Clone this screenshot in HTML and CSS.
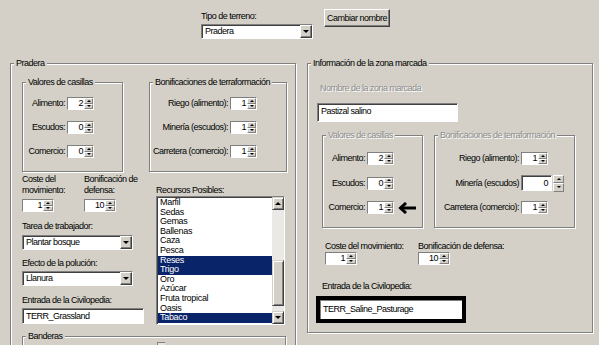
FILE: index.html
```html
<!DOCTYPE html>
<html lang="es">
<head>
  <meta charset="UTF-8">
  <title>Editor de terreno</title>
  <link rel="stylesheet" href="styles.css">
</head>
<body>
  <div class="top">
    <div class="terrain">
      <div class="lbl">Tipo de terreno:</div>
      <div class="combo combo-terrain"><span class="combo-text">Pradera</span><span class="drop"></span></div>
    </div>
    <div class="btn">Cambiar nombre</div>
  </div>

  <div class="panels">
    <!-- Panel izquierdo: terreno -->
    <div class="group panel-left">
      <div class="gtitle">Pradera</div>
      <div class="left-body">
        <div class="row-groups">
          <div class="group sub-vals">
            <div class="gtitle">Valores de casillas</div>
            <div class="fields pad-vals">
              <span class="flabel">Alimento:</span>
              <span class="spin"><span class="val">2</span><span class="ud"><i class="up"></i><i class="dn"></i></span></span>
              <span class="flabel">Escudos:</span>
              <span class="spin"><span class="val">0</span><span class="ud"><i class="up"></i><i class="dn"></i></span></span>
              <span class="flabel">Comercio:</span>
              <span class="spin"><span class="val">0</span><span class="ud"><i class="up"></i><i class="dn"></i></span></span>
            </div>
          </div>
          <div class="group sub-bonif">
            <div class="gtitle">Bonificaciones de terraformación</div>
            <div class="fields pad-bonif">
              <span class="flabel">Riego (alimento):</span>
              <span class="spin"><span class="val">1</span><span class="ud"><i class="up"></i><i class="dn"></i></span></span>
              <span class="flabel">Minería (escudos):</span>
              <span class="spin"><span class="val">1</span><span class="ud"><i class="up"></i><i class="dn"></i></span></span>
              <span class="flabel">Carretera (comercio):</span>
              <span class="spin"><span class="val">1</span><span class="ud"><i class="up"></i><i class="dn"></i></span></span>
            </div>
          </div>
        </div>

        <div class="row-lower">
          <div class="col-left">
            <div class="pair">
              <div class="cell cell-l">
                <div class="lbl">Coste del<br>movimiento:</div>
                <span class="spin spin-wide"><span class="val">1</span><span class="ud"><i class="up"></i><i class="dn"></i></span></span>
              </div>
              <div class="cell">
                <div class="lbl">Bonificación de<br>defensa:</div>
                <span class="spin spin-wide"><span class="val">10</span><span class="ud"><i class="up"></i><i class="dn"></i></span></span>
              </div>
            </div>
            <div class="lbl lbl-gap lbl-first">Tarea de trabajador:</div>
            <div class="combo combo-left"><span class="combo-text">Plantar bosque</span><span class="drop"></span></div>
            <div class="lbl lbl-gap2">Efecto de la polución:</div>
            <div class="combo combo-left"><span class="combo-text">Llanura</span><span class="drop"></span></div>
            <div class="lbl lbl-gap">Entrada de la Civilopedia:</div>
            <div class="edit edit-civ">TERR_Grassland</div>
          </div>

          <div class="col-right">
            <div class="lbl">Recursos Posibles:</div>
            <div class="listbox">
              <ul class="items">
                <li>Marfil</li>
                <li>Sedas</li>
                <li>Gemas</li>
                <li>Ballenas</li>
                <li>Caza</li>
                <li>Pesca</li>
                <li class="sel">Reses</li>
                <li class="sel">Trigo</li>
                <li>Oro</li>
                <li>Azúcar</li>
                <li>Fruta tropical</li>
                <li>Oasis</li>
                <li class="sel">Tabaco</li>
              </ul>
              <div class="vscroll">
                <div class="sb-btn sb-up"></div>
                <div class="sb-track"><div class="sb-thumb"></div></div>
                <div class="sb-btn sb-dn"></div>
              </div>
            </div>
          </div>
        </div>

        <div class="group banderas">
          <div class="gtitle">Banderas</div>
          <div class="chk"></div>
        </div>
      </div>
    </div>

    <!-- Panel derecho: zona marcada -->
    <div class="group panel-right">
      <div class="gtitle">Información de la zona marcada</div>
      <div class="right-body">
        <div class="lbl disabled name-lbl">Nombre de la zona marcada</div>
        <div class="edit edit-name">Pastizal salino</div>

        <div class="row-groups row-groups-r">
          <div class="group sub-vals">
            <div class="gtitle disabled">Valores de casillas</div>
            <div class="fields fields-r pad-vals">
              <span class="flabel">Alimento:</span>
              <span class="spin"><span class="val">2</span><span class="ud"><i class="up"></i><i class="dn"></i></span></span>
              <span class="flabel">Escudos:</span>
              <span class="spin"><span class="val">0</span><span class="ud"><i class="up"></i><i class="dn"></i></span></span>
              <span class="flabel">Comercio:</span>
              <span class="spin marked"><span class="val">1</span><span class="ud"><i class="up"></i><i class="dn"></i></span>
                <svg class="pointer" width="20" height="12" viewBox="0 0 20 12">
                  <path d="M19 6H4" stroke="#000" stroke-width="3" fill="none"/>
                  <path d="M9 1L3.5 6L9 11" stroke="#000" stroke-width="3" fill="none"/>
                </svg>
              </span>
            </div>
          </div>
          <div class="group sub-bonif-r">
            <div class="gtitle disabled">Bonificaciones de terraformación</div>
            <div class="fields fields-r pad-bonif-r">
              <span class="flabel">Riego (alimento):</span>
              <span class="spin"><span class="val">1</span><span class="ud"><i class="up"></i><i class="dn"></i></span></span>
              <span class="flabel">Minería (escudos)</span>
              <span class="mspin"><span class="medit">0</span><span class="ud ud-sep"><i class="up"></i><i class="dn"></i></span></span>
              <span class="flabel">Carretera (comercio):</span>
              <span class="spin"><span class="val">1</span><span class="ud"><i class="up"></i><i class="dn"></i></span></span>
            </div>
          </div>
        </div>

        <div class="pair pair-r">
          <div class="cell cell-r">
            <div class="lbl">Coste del movimiento:</div>
            <span class="spin spin-wide"><span class="val">1</span><span class="ud"><i class="up"></i><i class="dn"></i></span></span>
          </div>
          <div class="cell">
            <div class="lbl">Bonificación de defensa:</div>
            <span class="spin spin-wide"><span class="val">10</span><span class="ud"><i class="up"></i><i class="dn"></i></span></span>
          </div>
        </div>

        <div class="lbl civ-lbl">Entrada de la Civilopedia:</div>
        <div class="edit edit-focus">TERR_Saline_Pasturage</div>
      </div>
    </div>
  </div>
</body>
</html>
```

FILE: styles.css
```css
* {
  box-sizing: border-box;
}

html, body {
  margin: 0;
  padding: 0;
}

body {
  width: 599px;
  height: 345px;
  overflow: hidden;
  background-color: #d4d0c8;
  color: #000;
  font-family: "Liberation Sans", Arial, sans-serif;
  font-size: 9px;
  letter-spacing: -0.5px;
  line-height: 11px;
}

.lbl {
  line-height: 11px;
  white-space: nowrap;
}

.disabled {
  color: #8d8d8d;
  text-shadow: 1px 1px 0 #fff;
}

/* Barra superior */
.top {
  display: flex;
  align-items: flex-start;
  height: 63px;
  padding: 9px 0 0 201px;
}

.terrain .lbl {
  margin-top: 2px;
}

.btn {
  display: flex;
  align-items: center;
  justify-content: center;
  width: 66px;
  height: 18px;
  margin-left: 11px;
  border: 1px solid;
  border-color: #fff #404040 #404040 #fff;
  box-shadow: inset -1px -1px 0 #808080;
  white-space: nowrap;
}

/* Combos y campos */
.combo {
  display: flex;
  height: 15px;
  background: #fff;
  border: 1px solid;
  border-color: #808080 #fff #fff #808080;
  box-shadow: inset 1px 1px 0 #404040;
}

.combo-terrain {
  width: 112px;
  margin-top: 2px;
}

.combo-left {
  width: 111px;
}

.combo-text {
  flex: 1;
  padding: 1px 0 0 3px;
  line-height: 11px;
  white-space: nowrap;
}

.drop {
  display: flex;
  align-items: center;
  justify-content: center;
  width: 12px;
  background: #d4d0c8;
  border: 1px solid;
  border-color: #fff #404040 #404040 #fff;
  box-shadow: inset -1px -1px 0 #808080;
}

.drop::before {
  content: "";
  border-left: 3px solid transparent;
  border-right: 3px solid transparent;
  border-top: 3px solid #000;
}

.edit {
  background: #fff;
  border: 1px solid;
  border-color: #808080 #fff #fff #808080;
  box-shadow: inset 1px 1px 0 #404040;
  padding: 2px 0 0 3px;
  white-space: nowrap;
}

/* Marcos de grupo */
.panels {
  display: flex;
  align-items: flex-start;
  gap: 11px;
  padding-left: 10px;
}

.group {
  border: 1px solid #808080;
  box-shadow: 1px 1px 0 #fff, inset 1px 1px 0 #fff;
}

.gtitle {
  display: table;
  height: 11px;
  margin: -6px 0 0 3px;
  padding: 0 2px;
  background: #d4d0c8;
  white-space: nowrap;
}

.panel-left {
  width: 286px;
  height: 300px;
}

.panel-right {
  width: 286px;
  height: 270px;
}

.left-body {
  padding: 13px 0 0 11px;
}

.row-groups {
  display: flex;
  align-items: flex-start;
}

.sub-vals {
  width: 101px;
}

.sub-bonif {
  width: 138px;
  margin-left: 26px;
}

.sub-bonif-r {
  width: 141px;
  margin-left: 11px;
}

.fields {
  display: grid;
  grid-template-columns: 1fr auto;
  column-gap: 2px;
  row-gap: 11px;
  align-items: center;
  grid-auto-rows: 13px;
  padding-top: 9px;
  padding-bottom: 13px;
}

.fields-r {
  grid-template-rows: 13px 16px 13px;
  row-gap: 10px;
  padding-top: 11px;
  padding-bottom: 13px;
}

.pad-vals {
  padding-right: 28px;
}

.pad-bonif {
  padding-right: 29px;
}

.pad-bonif-r {
  padding-right: 10px;
}

.flabel {
  text-align: right;
  white-space: nowrap;
}

/* Control numérico */
.spin {
  position: relative;
  display: flex;
  width: 27px;
  height: 13px;
  background: #fff;
  border: 1px solid;
  border-color: #808080 #fff #fff #808080;
}

.spin-wide {
  width: 32px;
}

.val {
  flex: 1;
  text-align: right;
  padding-right: 1px;
  line-height: 11px;
}

.ud {
  display: flex;
  flex-direction: column;
  width: 9px;
}

.spin-wide .ud {
  width: 10px;
}

.ud i {
  flex: 1;
  display: flex;
  align-items: center;
  justify-content: center;
  background: #d4d0c8;
  border: 1px solid;
  border-color: #fff #808080 #808080 #fff;
}

.ud .up::before,
.ud .dn::before {
  content: "";
  border-left: 2px solid transparent;
  border-right: 2px solid transparent;
}

.ud .up::before {
  border-bottom: 2px solid #000;
}

.ud .dn::before {
  border-top: 2px solid #000;
}

.mspin {
  display: flex;
  align-items: flex-start;
}

.medit {
  width: 31px;
  height: 16px;
  background: #fff;
  border: 1px solid;
  border-color: #808080 #fff #fff #808080;
  box-shadow: inset 1px 1px 0 #404040;
  text-align: right;
  padding: 2px 3px 0 0;
}

.ud-sep {
  width: 11px;
  height: 17px;
  margin-left: 1px;
}

.pointer {
  position: absolute;
  left: calc(100% + 4px);
  top: 0;
}

/* Parte inferior izquierda */
.row-lower {
  display: flex;
  align-items: flex-start;
}

.col-left {
  width: 123px;
  padding-top: 2px;
}

.pair {
  display: flex;
}

.cell-l {
  width: 62px;
}

.cell .spin {
  margin-top: 3px;
}

.lbl-gap {
  margin-top: 9px;
  margin-bottom: 2px;
}

.lbl-first {
  margin-bottom: 3px;
}

.lbl-gap2 {
  margin-top: 8px;
  margin-bottom: 2px;
}

.edit-civ {
  width: 122px;
  height: 16px;
}

.col-right {
  margin-left: 11px;
  padding-top: 13px;
}

/* Lista de recursos */
.listbox {
  display: flex;
  width: 129px;
  height: 129px;
  background: #fff;
  border: 1px solid;
  border-color: #808080 #fff #fff #808080;
  box-shadow: inset 1px 1px 0 #404040;
  overflow: hidden;
}

.items {
  flex: 1;
  list-style: none;
  margin: 0;
  padding: 1px 0 0 1px;
  overflow: hidden;
}

.items li {
  height: 9.6px;
  line-height: 9.6px;
  padding-left: 2px;
  white-space: nowrap;
  letter-spacing: -0.3px;
}

.items .sel {
  background: #0a246a;
  color: #fff;
}

.vscroll {
  display: flex;
  flex-direction: column;
  width: 12px;
}

.sb-btn {
  display: flex;
  align-items: center;
  justify-content: center;
  height: 13px;
  background: #d4d0c8;
  border: 1px solid;
  border-color: #d4d0c8 #404040 #404040 #d4d0c8;
  box-shadow: inset 1px 1px 0 #fff, inset -1px -1px 0 #808080;
}

.sb-btn::before {
  content: "";
  border-left: 3px solid transparent;
  border-right: 3px solid transparent;
}

.sb-up::before {
  border-bottom: 3px solid #000;
}

.sb-dn::before {
  border-top: 3px solid #000;
}

.sb-track {
  flex: 1;
  background: #ebe9e5;
}

.sb-thumb {
  height: 46px;
  margin-top: 50px;
  background: #d4d0c8;
  border: 1px solid;
  border-color: #d4d0c8 #404040 #404040 #d4d0c8;
  box-shadow: inset 1px 1px 0 #fff, inset -1px -1px 0 #808080;
}

.banderas {
  width: 264px;
  height: 40px;
  margin-top: 11px;
}

.chk {
  width: 8px;
  height: 8px;
  margin-left: 134px;
  background: #e4e2de;
  border-top: 1px solid #808080;
  border-left: 1px solid #808080;
}

/* Panel derecho */
.right-body {
  padding-left: 9px;
}

.name-lbl {
  margin: 14px 0 0 3px;
}

.edit-name {
  width: 141px;
  height: 19px;
  margin-top: 9px;
}

.row-groups-r {
  margin: 13px 0 0 5px;
}

.pair-r {
  margin: 13px 0 0 8px;
}

.cell-r {
  width: 93px;
}

.pair-r .cell .spin {
  margin-top: 0;
}

.civ-lbl {
  margin: 16px 0 0 5px;
}

.edit-focus {
  width: 150px;
  height: 27px;
  margin: 4px 0 0 -1px;
  border: 4px solid #000;
  box-shadow: inset 1px 1px 0 #808080;
  padding: 4px 0 0 3px;
}
```
